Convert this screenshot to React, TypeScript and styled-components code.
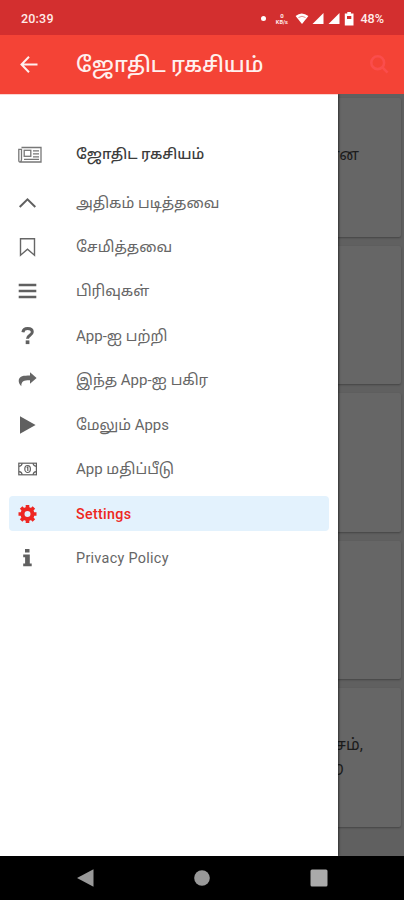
import React from 'react';
import styled, { createGlobalStyle } from 'styled-components';

const Global = createGlobalStyle`
  * { box-sizing: border-box; }
  body { margin: 0; font-family: Roboto, 'Noto Sans Tamil', 'Noto Sans', sans-serif; }
`;

const Screen = styled.div`
  width: 404px;
  height: 900px;
  display: flex;
  flex-direction: column;
  overflow: hidden;
  background: #000;
`;

const StatusBar = styled.header`
  height: 35px;
  flex: none;
  display: flex;
  align-items: center;
  justify-content: space-between;
  padding: 2px 20px 0 21px;
  background: #d32f2f;
  color: #ffebe9;
`;

const Clock = styled.span`
  font-size: 12.5px;
  letter-spacing: 0.2px;
  font-weight: 500;
`;

const StatusIcons = styled.div`
  display: flex;
  align-items: center;
  svg { display: block; }
`;

const Dot = styled.i`
  width: 5px;
  height: 5px;
  border-radius: 50%;
  background: #fff;
  margin-right: 8px;
`;

const Speed = styled.span`
  display: flex;
  flex-direction: column;
  align-items: center;
  width: 15px;
  font-size: 6px;
  line-height: 7px;
  font-weight: 700;
  margin-right: 6px;
  small { font-size: 5.6px; line-height: 7px; }
`;

const Battery = styled.span`
  font-size: 12.6px;
  font-weight: 500;
  margin-left: 5px;
`;

const AppBar = styled.div`
  height: 59px;
  flex: none;
  display: flex;
  align-items: center;
  padding: 0 14px 0 20px;
  background: #f44336;
  color: #fff0ee;
`;

const Title = styled.h1<{ $size: number }>`
  flex: 1;
  margin: 1px 0 0 38px;
  font-size: ${(p) => p.$size}px;
  line-height: 30px;
  font-weight: 500;
  white-space: nowrap;
`;

const Body = styled.main`
  position: relative;
  height: 762px;
  flex: none;
  background: #606060;
  overflow: hidden;
`;

const Feed = styled.div`
  display: flex;
  flex-direction: column;
  gap: 9px;
  padding: 4px 3px 0;
`;

const Card = styled.article`
  height: 138.6px;
  flex: none;
  display: flex;
  justify-content: flex-end;
  background: #666;
  border-radius: 2px;
  box-shadow: 0 1px 2px rgba(0, 0, 0, 0.3);
`;

const CardText = styled.p<{ $top: number }>`
  margin: 0;
  padding-top: ${(p) => p.$top}px;
  width: 260px;
  display: flex;
  flex-direction: column;
  color: #1c1c1c;
  font-size: 16px;
  line-height: 23px;
`;

const CardLine = styled.span<{ $end: number }>`
  text-align: right;
  padding-right: ${(p) => p.$end}px;
  white-space: nowrap;
`;

const Drawer = styled.nav`
  position: absolute;
  inset: 0 auto 0 0;
  width: 338px;
  padding: 42px 9px 0;
  background: #fff;
  border-top: 1px solid #fbd5d2;
  box-shadow: 1px 0 2px rgba(0, 0, 0, 0.55);
`;

const Item = styled.a<{ $active?: boolean; $heading?: boolean }>`
  height: 35px;
  display: flex;
  align-items: center;
  margin-bottom: ${(p) => (p.$heading ? 13 : 9.45)}px;
  padding-left: 9px;
  border-radius: 4px;
  background: ${(p) => (p.$active ? '#e3f2fd' : 'transparent')};
  color: ${(p) => (p.$active ? '#ee2722' : p.$heading ? '#3c3c3c' : '#666')};
  font-weight: ${(p) => (p.$heading || p.$active ? 500 : 400)};
  svg { display: block; width: 26px; height: 22px; flex: none; }
`;

const Label = styled.span<{ $size: number; $space?: number; $drop?: number }>`
  margin-left: 32px;
  padding-top: ${(p) => p.$drop ?? 0}px;
  font-size: ${(p) => p.$size}px;
  letter-spacing: ${(p) => p.$space ?? 0}px;
  line-height: 24px;
  white-space: nowrap;
`;

const NavBar = styled.footer`
  flex: 1;
  display: flex;
  justify-content: space-between;
  align-items: center;
  padding: 0 76px 0 77px;
  background: #000;
  svg { display: block; }
`;

/* Menu glyphs share a 26x22 box whose main axis is at x = 9.5. */
const glyphs: Record<string, React.ReactNode> = {
  news: (
    <g fill="none" stroke="#777" strokeWidth="1.3">
      <path d="M3.5 3.5H23V18H2Q.8 18 .8 16.5V5.3H3.5V15.5Q3.5 17.5 2.2 17.6" />
      <rect x="6.2" y="6.3" width="6.6" height="6" />
      <path d="M15 6.8h6M15 9.8h6M15 12.8h6M6 15.3h15" />
    </g>
  ),
  up: <path d="M1.7 15 9.5 7.3 17.3 15" fill="none" stroke="#606060" strokeWidth="2" />,
  bookmark: <path d="M2.5 2.7h14v16.5l-7-6.1-7 6.1z" fill="none" stroke="#666" strokeWidth="1.4" />,
  bars: <path d="M.7 5h17.6M.7 11h17.6M.7 17h17.6" stroke="#606060" strokeWidth="2.4" />,
  question: (
    <g>
      <path d="M4.9 7.2C5.3 4.5 7 3.6 9.6 3.6c3 0 4.7 1.4 4.7 3.5 0 3.2-4.8 3.3-4.8 6.6" fill="none" stroke="#606060" strokeWidth="3" />
      <rect x="7.7" y="15.4" width="3.7" height="3.7" fill="#606060" />
    </g>
  ),
  share: <path d="M12 3.3 18.6 9 12 14.7v-3.4C6.5 11.2 3.2 12 3.3 17.2 1.8 15.6.7 13.8.7 12c0-5.3 5.2-5.6 11.3-5.6z" fill="#666" />,
  play: <path d="M2 2.3 17.6 11 2 19.7z" fill="#606060" />,
  money: (
    <g fill="none" stroke="#606060" strokeWidth="1.2">
      <rect x=".8" y="5.2" width="17.6" height="11.6" />
      <path d="M1 8.3Q4 8 4.1 5.3M15.1 5.3Q15.3 8 18.3 8.3M1 13.7Q4 14 4.1 16.7M15.1 16.7Q15.3 14 18.3 13.7" />
      <ellipse cx="9.6" cy="11" rx="2.8" ry="3.5" />
      <path d="M8.8 9.8l1-.8v4" />
    </g>
  ),
  cog: (
    <g>
      <circle cx="9.5" cy="11" r="5" fill="none" stroke="#ee2722" strokeWidth="4" />
      <path d="M9.5 2v3M9.5 17v3M.5 11h3M15.5 11h3M3.1 4.6l2.2 2.2M13.7 15.2l2.2 2.2M15.9 4.6l-2.2 2.2M5.3 15.2l-2.2 2.2" stroke="#ee2722" strokeWidth="3.6" />
    </g>
  ),
  info: <path d="M7 2h4.5v3.5H7zM5.2 7.5h6.6v9h1.9v2.7H5.2v-2.7h1.9v-6.2H5.2z" fill="#606060" />,
};

const items = [
  { icon: 'news', text: 'ஜோதிட ரகசியம்', size: 14.5, heading: true, drop: 1 },
  { icon: 'up', text: 'அதிகம் படித்தவை', size: 15 },
  { icon: 'bookmark', text: 'சேமித்தவை', size: 15 },
  { icon: 'bars', text: 'பிரிவுகள்', size: 15 },
  { icon: 'question', text: 'App-ஐ பற்றி', size: 15 },
  { icon: 'share', text: 'இந்த App-ஐ பகிர', size: 15 },
  { icon: 'play', text: 'மேலும் Apps', size: 14.9 },
  { icon: 'money', text: 'App மதிப்பீடு', size: 15 },
  { icon: 'cog', text: 'Settings', size: 14.3, active: true, space: 0.3 },
  { icon: 'info', text: 'Privacy Policy', size: 14.4, space: 0.3, drop: 1 },
];

const cards = [
  { top: 45, lines: [{ text: 'பலன்கள் என்ன', end: 42 }] },
  { top: 0, lines: [] },
  { top: 0, lines: [] },
  { top: 0, lines: [] },
  { top: 45, lines: [{ text: 'பரிகாரம் அம்சம்,', end: 38 }, { text: 'மற்ற', end: 57 }] },
];

const Signal = () => (
  <svg width="16" height="13" viewBox="0 0 16 13"><path d="M.5 12 11.5 1V12z" fill="#fff" /></svg>
);

export default function App() {
  return (
    <>
      <Global />
      <Screen>
        <StatusBar>
          <Clock>20:39</Clock>
          <StatusIcons>
            <Dot />
            <Speed>0<small>KB/s</small></Speed>
            <svg width="17" height="13" viewBox="0 0 17 13">
              <path d="M.6 4Q6.5-1 13.4 4L7 12z" fill="#fff" />
              <path d="M3.5 5.5Q7 3 10.5 5.5" fill="none" stroke="#e88c8c" />
            </svg>
            <Signal />
            <Signal />
            <svg width="11" height="14" viewBox="0 0 11 14">
              <path d="M3.3 0h3.6v1.6h2.6V13.5H.8V1.6h2.5z" fill="#fff" />
              <path d="M3 4h4.3v3H3z" fill="#d32f2f" />
            </svg>
            <Battery>48%</Battery>
          </StatusIcons>
        </StatusBar>
        <AppBar>
          <svg width="18" height="18" viewBox="0 0 18 18">
            <path d="M17.5 8.5H2M9 .8 1.5 8.5 9 16.2" fill="none" stroke="#fff0ee" strokeWidth="2" />
          </svg>
          <Title $size={21.2}>ஜோதிட ரகசியம்</Title>
          <svg width="21" height="21" viewBox="0 0 21 21">
            <g fill="none" stroke="#fa4d4c" strokeWidth="2.6">
              <circle cx="8.7" cy="8.7" r="6.4" />
              <path d="m13.4 13.4 5.2 5.2" />
            </g>
          </svg>
        </AppBar>
        <Body>
          <Feed>
            {cards.map((c, i) => (
              <Card key={i}>
                <CardText $top={c.top}>
                  {c.lines.map((l) => <CardLine key={l.text} $end={l.end}>{l.text}</CardLine>)}
                </CardText>
              </Card>
            ))}
          </Feed>
          <Drawer>
            {items.map((it) => (
              <Item key={it.icon} $active={it.active} $heading={it.heading}>
                <svg viewBox="0 0 26 22">{glyphs[it.icon]}</svg>
                <Label $size={it.size} $space={it.space} $drop={it.drop}>{it.text}</Label>
              </Item>
            ))}
          </Drawer>
        </Body>
        <NavBar>
          <svg width="17" height="18" viewBox="0 0 17 18"><path d="M0 9 16.5.3v17.4z" fill="#999" /></svg>
          <svg width="16" height="16" viewBox="0 0 16 16"><circle cx="8" cy="8" r="7.8" fill="#999" /></svg>
          <svg width="18" height="18" viewBox="0 0 18 18"><rect x=".5" y=".5" width="17" height="17" rx="1.5" fill="#aaa" /></svg>
        </NavBar>
      </Screen>
    </>
  );
}
